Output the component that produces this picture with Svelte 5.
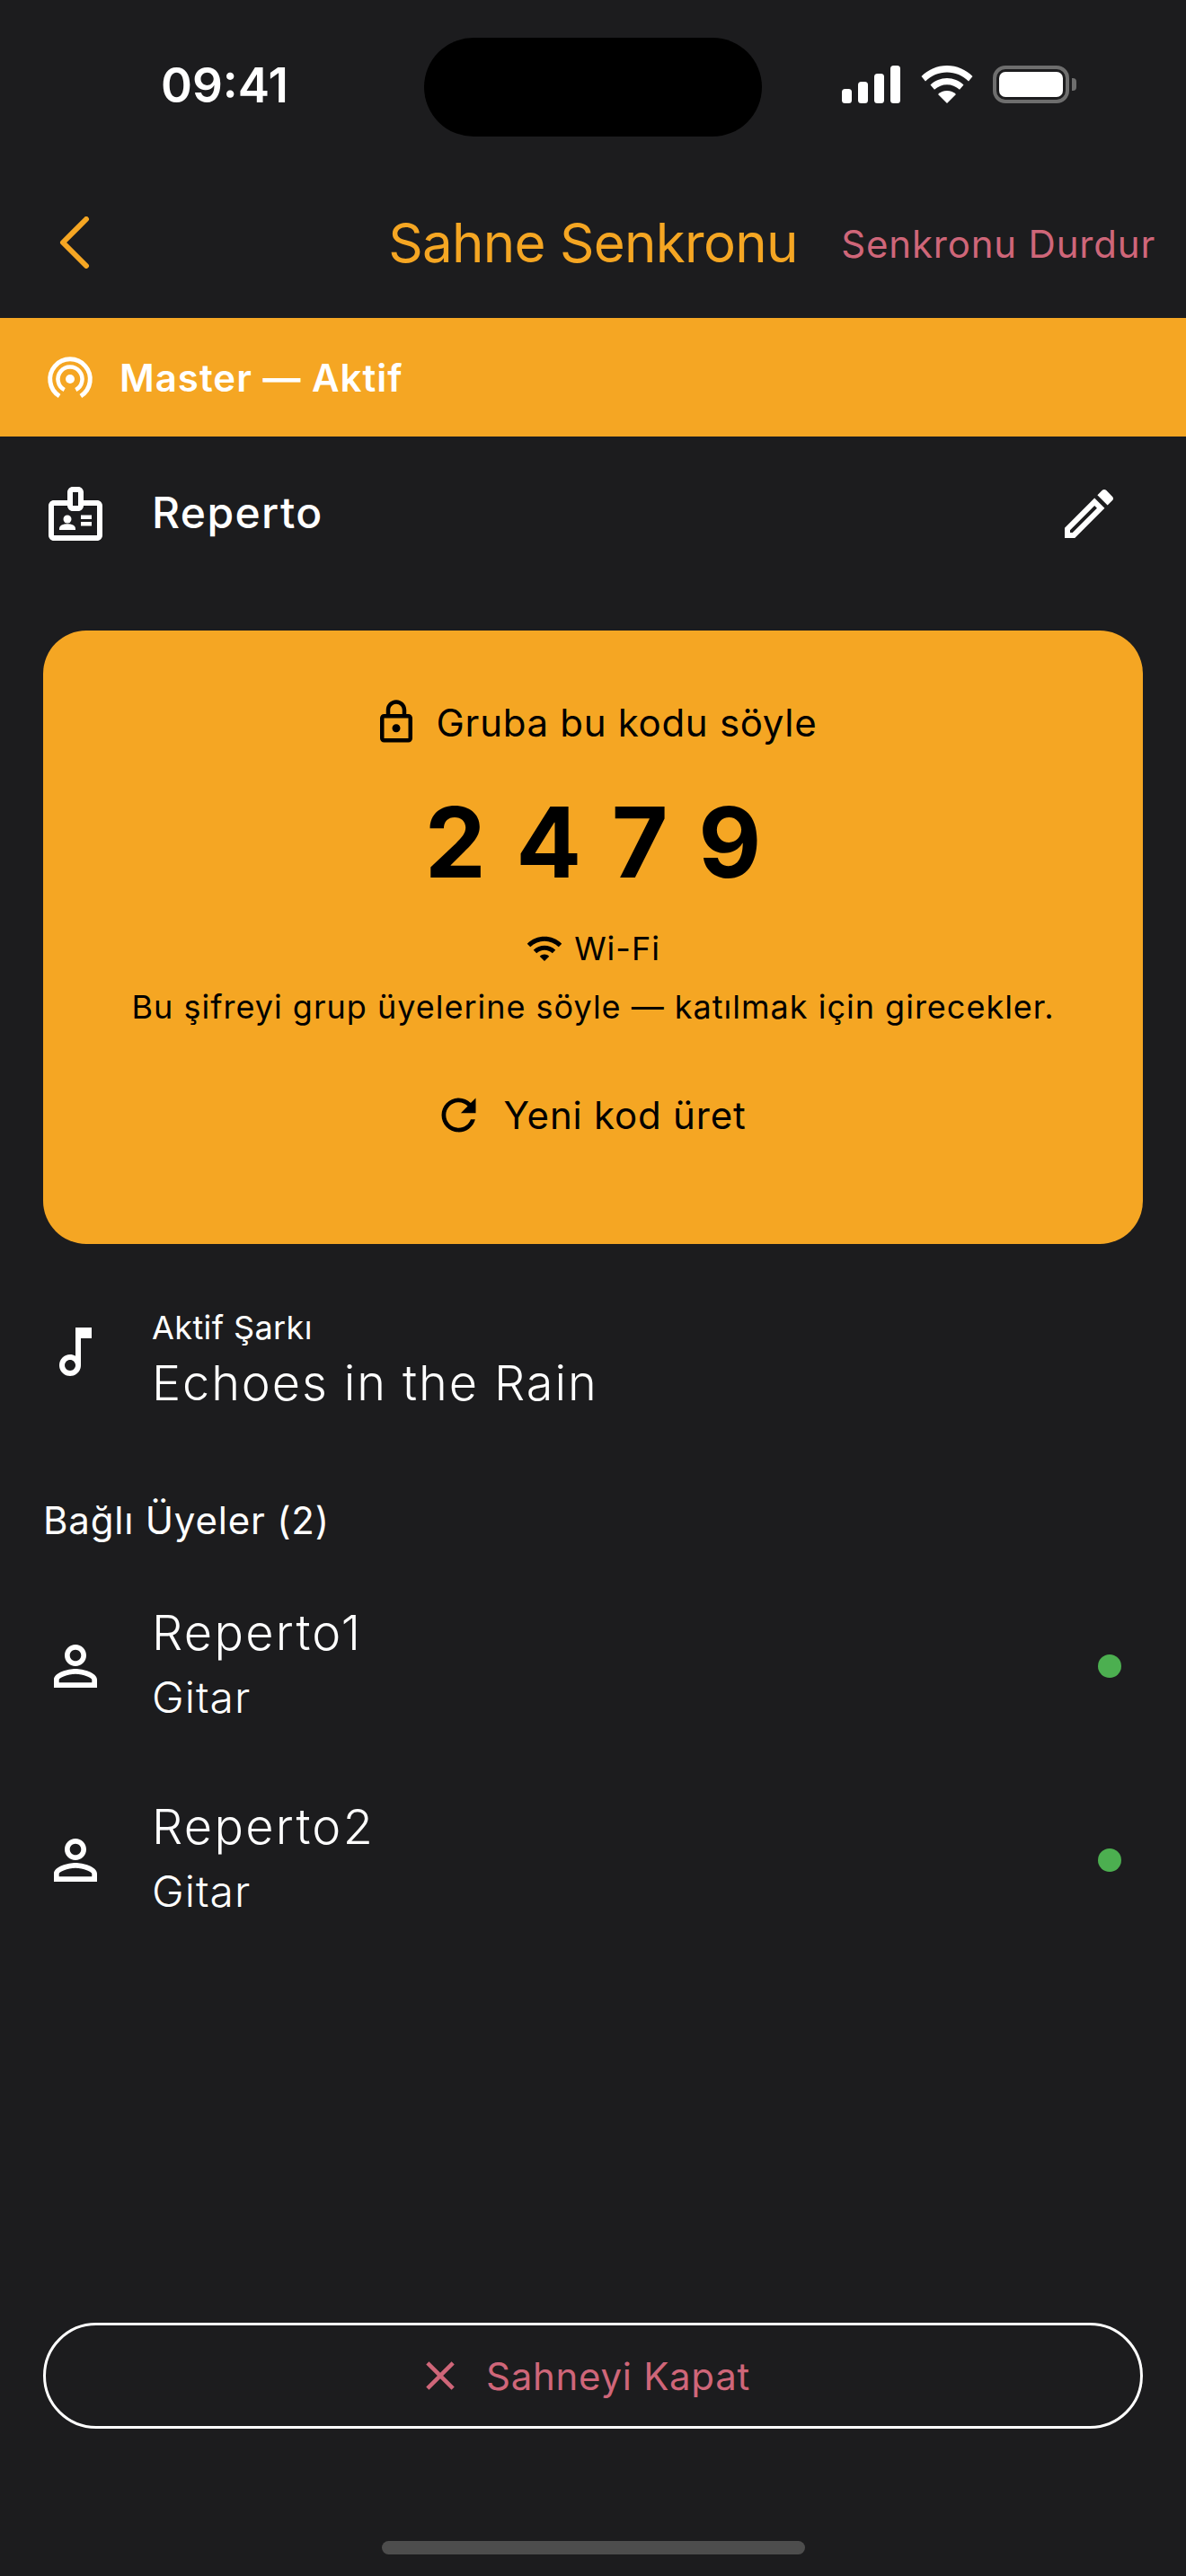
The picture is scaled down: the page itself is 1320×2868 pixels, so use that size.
<script>
	const members = [
		{ name: 'Reperto1', role: 'Gitar' },
		{ name: 'Reperto2', role: 'Gitar' }
	];
	const digits = '2 4 7 9';
</script>

<div class="screen">
	<header class="status">
		<span class="time">09:41</span>
		<div class="island"></div>
		<div class="status-icons">
			<svg class="signal" width="66" height="42" viewBox="0 0 66 42" fill="#fff">
				<rect x="0" y="26" width="11" height="16" rx="3.5" />
				<rect x="18" y="18" width="11" height="24" rx="3.5" />
				<rect x="36" y="9" width="11" height="33" rx="3.5" />
				<rect x="54" y="0" width="11" height="42" rx="3.5" />
			</svg>
			<svg class="wifi-top" width="58" height="42" viewBox="0 0 58 42" fill="#fff">
				<path d="M29 0c11 0 21 4.500 28.500 12l-4.500 5.500C46.500 11 38 7.500 29 7.500S11.500 11 5 17.500L.5 12C8 4.500 18 0 29 0z" />
				<path d="M29 14c7 0 13.500 2.800 18.500 7.500l-4.500 5.300C39 23.300 34.200 21.300 29 21.300s-10 2-14 5.500l-4.500-5.300C15.500 16.800 22 14 29 14z" />
				<path d="M29 28c3.800 0 7.400 1.400 10 3.900L29 42 19 31.900c2.600-2.500 6.200-3.900 10-3.900z" />
			</svg>
			<div class="battery">
				<div class="battery-body"><div class="battery-fill"></div></div>
				<div class="battery-cap"></div>
			</div>
		</div>
	</header>

	<nav class="appbar">
		<button class="back" aria-label="Geri">
			<svg width="36" height="58" viewBox="0 0 36 58" fill="none" stroke="#f5a623" stroke-width="6" stroke-linecap="round" stroke-linejoin="round">
				<path d="M31 3 5 29l26 26" />
			</svg>
		</button>
		<h1>Sahne Senkronu</h1>
		<span class="stop">Senkronu Durdur</span>
	</nav>

	<div class="banner">
		<svg width="60" height="60" viewBox="0 0 60 60" fill="none" stroke="#fff">
			<path d="M18.100 51A22.300 22.300 0 1 1 41.900 51" stroke-width="5" />
			<path d="M23.700 44A13.500 13.500 0 1 1 36.300 44" stroke-width="4.500" />
			<circle cx="30" cy="32" r="5" fill="#fff" stroke="none" />
		</svg>
		<span>Master — Aktif</span>
	</div>

	<div class="group-row">
		<svg class="lead" width="72" height="72" viewBox="0 0 24 24" fill="#fff">
			<path d="M20 7h-5V4c0-1.100-.9-2-2-2h-2C9.900 2 9 2.900 9 4v3H4C2.900 7 2 7.900 2 9v11c0 1.100.9 2 2 2h16c1.100 0 2-.9 2-2V9c0-1.100-.9-2-2-2zM11 4h2v5h-2V4zm9 16H4V9h5c0 1.100.9 2 2 2h2c1.100 0 2-.9 2-2h5v11z" />
			<circle cx="9" cy="14" r="1.500" />
			<path d="M11.080 16.180C10.440 15.900 9.740 15.750 9 15.750s-1.440.15-2.080.43C6.360 16.420 6 16.960 6 17.570V18h6v-.43c0-.61-.36-1.150-.92-1.390zM14 12.500h4V14h-4zM14 15h4v1.500h-4z" />
		</svg>
		<span class="group-name">Reperto</span>
		<svg class="edit" width="72" height="72" viewBox="0 0 24 24" fill="#fff">
			<path d="M14.060 9.020l.92.92L5.920 19H5v-.92l9.060-9.060M17.660 3c-.25 0-.51.1-.7.29l-1.830 1.830 3.750 3.750 1.830-1.830c.39-.39.39-1.020 0-1.410l-2.340-2.340c-.2-.2-.45-.29-.71-.29zm-3.600 3.190L3 17.250V21h3.750L17.810 9.940l-3.750-3.750z" />
		</svg>
	</div>

	<section class="code-card">
		<div class="code-title">
			<svg width="54" height="54" viewBox="0 0 24 24" fill="#000">
				<path d="M18 8h-1V6c0-2.760-2.240-5-5-5S7 3.240 7 6v2H6c-1.100 0-2 .9-2 2v10c0 1.100.9 2 2 2h12c1.100 0 2-.9 2-2V10c0-1.100-.9-2-2-2zM9 6c0-1.660 1.340-3 3-3s3 1.340 3 3v2H9V6zm9 14H6V10h12v10zm-6-3c1.100 0 2-.9 2-2s-.9-2-2-2-2 .9-2 2 .9 2 2 2z" />
			</svg>
			<span>Gruba bu kodu söyle</span>
		</div>
		<div class="code">{digits}</div>
		<div class="transport">
			<svg width="42" height="42" viewBox="0 0 24 24" fill="#000">
				<path d="M1 9l2 2c4.970-4.970 13.030-4.970 18 0l2-2C16.930 2.930 7.080 2.930 1 9zm8 8l3 3 3-3c-1.650-1.660-4.340-1.660-6 0zm-4-4l2 2c2.760-2.760 7.240-2.760 10 0l2-2C15.140 9.140 8.870 9.140 5 13z" />
			</svg>
			<span>Wi-Fi</span>
		</div>
		<p class="hint">Bu şifreyi grup üyelerine söyle — katılmak için girecekler.</p>
		<button class="regen">
			<svg width="57" height="57" viewBox="0 0 24 24" fill="#000">
				<path d="M17.650 6.350C16.200 4.900 14.210 4 12 4c-4.420 0-7.990 3.580-7.990 8s3.570 8 7.990 8c3.730 0 6.840-2.550 7.730-6h-2.080c-.82 2.330-3.040 4-5.650 4-3.310 0-6-2.690-6-6s2.690-6 6-6c1.660 0 3.140.69 4.220 1.780L13 11h7V4l-2.350 2.350z" />
			</svg>
			<span>Yeni kod üret</span>
		</button>
	</section>

	<div class="song">
		<svg class="lead note" width="72" height="72" viewBox="0 0 24 24" fill="#fff">
			<path d="M12 3l.01 10.550c-.59-.34-1.270-.55-2-.55C7.790 13 6 14.790 6 17s1.790 4 4.010 4S14 19.210 14 17V7h4V3h-6zm-1.990 16c-1.100 0-2-.9-2-2s.9-2 2-2 2 .9 2 2-.9 2-2 2z" />
		</svg>
		<div class="song-text">
			<span class="song-label">Aktif Şarkı</span>
			<span class="song-name">Echoes in the Rain</span>
		</div>
	</div>

	<h2 class="members-title">Bağlı Üyeler (2)</h2>

	<ul class="members">
		{#each members as m (m.name)}
			<li class="member">
				<svg class="lead" width="72" height="72" viewBox="0 0 24 24" fill="#fff">
					<path d="M12 5.900c1.160 0 2.100.94 2.100 2.100s-.94 2.100-2.100 2.100S9.900 9.160 9.900 8s.94-2.100 2.100-2.100m0 9c2.970 0 6.100 1.460 6.100 2.100v1.100H5.900V17c0-.64 3.130-2.100 6.100-2.100M12 4C9.790 4 8 5.790 8 8s1.790 4 4 4 4-1.790 4-4-1.790-4-4-4zm0 9c-2.670 0-8 1.340-8 4v3h16v-3c0-2.660-5.330-4-8-4z" />
				</svg>
				<div class="member-text">
					<span class="member-name">{m.name}</span>
					<span class="member-role">{m.role}</span>
				</div>
				<span class="dot"></span>
			</li>
		{/each}
	</ul>

	<div class="bottom">
		<button class="close">
			<svg width="54" height="54" viewBox="0 0 24 24" fill="#cf6679">
				<path d="M19 6.410 17.590 5 12 10.590 6.410 5 5 6.410 10.590 12 5 17.590 6.410 19 12 13.410 17.590 19 19 17.590 13.410 12z" />
			</svg>
			<span>Sahneyi Kapat</span>
		</button>
		<div class="home"></div>
	</div>
</div>

<style>
	:global(body) {
		margin: 0;
		background: #1c1c1e;
	}

	.screen {
		width: 1320px;
		height: 2868px;
		display: flex;
		flex-direction: column;
		background: #1c1c1e;
		color: #fff;
		font-family: Inter, 'Liberation Sans', sans-serif;
		overflow: hidden;
	}

	button {
		font: inherit;
		background: none;
		border: none;
		padding: 0;
		color: inherit;
	}

	/* status bar */
	.status {
		height: 190px;
		flex: none;
		position: relative;
	}

	.time {
		position: absolute;
		left: 179px;
		top: 64px;
		font-size: 53px;
		line-height: 62px;
		font-weight: 600;
	}

	.island {
		position: absolute;
		left: 472px;
		top: 42px;
		width: 376px;
		height: 110px;
		border-radius: 55px;
		background: #000;
	}

	.status-icons {
		position: absolute;
		left: 937px;
		top: 73px;
		display: flex;
		align-items: flex-end;
		gap: 12px;
	}

	.wifi-top {
		margin-left: 10px;
	}

	.battery {
		display: flex;
		align-items: center;
		margin-left: 10px;
		gap: 3px;
	}

	.battery-body {
		width: 85px;
		height: 42px;
		box-sizing: border-box;
		border: 4px solid #6e6e6e;
		border-radius: 14px;
		padding: 3px;
	}

	.battery-fill {
		height: 100%;
		background: #fff;
		border-radius: 7px;
	}

	.battery-cap {
		width: 5px;
		height: 14px;
		background: #6e6e6e;
		border-radius: 0 4px 4px 0;
	}

	/* app bar */
	.appbar {
		height: 164px;
		flex: none;
		position: relative;
		display: flex;
		align-items: center;
		justify-content: center;
		padding-bottom: 4px;
		box-sizing: border-box;
	}

	.back {
		position: absolute;
		left: 65px;
		top: 51px;
		display: flex;
	}

	h1 {
		margin: 0;
		font-size: 60px;
		font-weight: 400;
		color: #f5a623;
		letter-spacing: -0.700px;
	}

	.stop {
		position: absolute;
		right: 34px;
		top: 57px;
		font-size: 42px;
		line-height: 50px;
		color: #cf6679;
		letter-spacing: 0.800px;
	}

	/* master banner */
	.banner {
		height: 132px;
		flex: none;
		display: flex;
		align-items: center;
		gap: 25px;
		padding-left: 48px;
		background: #f5a623;
	}

	.banner span {
		font-size: 42px;
		font-weight: 600;
		letter-spacing: 1px;
	}

	.group-row {
		height: 172px;
		flex: none;
		display: flex;
		align-items: center;
		padding: 0 72px 0 48px;
	}

	.group-name {
		flex: 1;
		margin: 0 0 4px 49px;
		font-size: 48px;
		font-weight: 500;
		letter-spacing: 1.400px;
	}

	/* code card */
	.code-card {
		margin: 44px 48px 0;
		height: 683px;
		flex: none;
		box-sizing: border-box;
		padding-top: 72px;
		display: flex;
		flex-direction: column;
		align-items: center;
		background: #f5a623;
		border-radius: 48px;
		color: #000;
	}

	.code-title {
		display: flex;
		align-items: center;
		gap: 18px;
		height: 60px;
		padding-left: 3px;
		font-size: 42px;
		font-weight: 430;
		letter-spacing: 0.700px;
	}

	.code {
		margin-top: 39px;
		padding-left: 4px;
		font-size: 108px;
		line-height: 130px;
		font-weight: 700;
		letter-spacing: 4px;
		white-space: pre;
	}

	.transport {
		margin-top: 31px;
		display: flex;
		align-items: center;
		gap: 12px;
		font-size: 36px;
		line-height: 44px;
		letter-spacing: 1px;
	}

	.hint {
		margin: 21px 0 0;
		font-size: 36px;
		line-height: 44px;
		letter-spacing: 1px;
	}

	.regen {
		margin-top: 70px;
		display: flex;
		align-items: center;
		gap: 22px;
		padding-right: 8px;
		font-size: 42px;
		font-weight: 430;
		letter-spacing: 0.800px;
	}

	/* active song */
	.song {
		margin-top: 70px;
		display: flex;
		align-items: center;
		padding-left: 48px;
		flex: none;
	}

	.note {
		margin-bottom: 24px;
	}

	.song-text,
	.member-text {
		margin-left: 49px;
		display: flex;
		flex-direction: column;
	}

	.song-label {
		font-size: 36px;
		line-height: 46px;
		letter-spacing: 0.400px;
	}

	.song-name {
		font-size: 54px;
		line-height: 78px;
		font-weight: 350;
		letter-spacing: 1.900px;
	}

	.members-title {
		margin: 86px 0 0 48px;
		font-size: 42px;
		line-height: 56px;
		font-weight: 400;
		letter-spacing: 0.800px;
	}

	.members {
		list-style: none;
		margin: 26px 0 0;
		padding: 0;
	}

	.member {
		height: 216px;
		display: flex;
		align-items: center;
		padding: 0 72px 0 48px;
	}

	.member-text {
		flex: 1;
		padding-bottom: 8px;
	}

	.member-name {
		font-size: 54px;
		line-height: 78px;
		font-weight: 350;
		letter-spacing: 2.300px;
	}

	.member-role {
		font-size: 48px;
		line-height: 66px;
		font-weight: 350;
		letter-spacing: 1px;
	}

	.dot {
		width: 26px;
		height: 26px;
		border-radius: 50%;
		background: #4caf50;
	}

	/* bottom */
	.bottom {
		margin-top: auto;
		padding: 0 48px 24px;
		display: flex;
		flex-direction: column;
		align-items: center;
	}

	.close {
		width: 100%;
		height: 118px;
		box-sizing: border-box;
		display: flex;
		align-items: center;
		justify-content: center;
		gap: 24px;
		padding-right: 22px;
		border: 3px solid #fff;
		border-radius: 59px;
		color: #cf6679;
		font-size: 42px;
		font-weight: 430;
		letter-spacing: 0.700px;
	}

	.home {
		margin-top: 125px;
		width: 471px;
		height: 15px;
		border-radius: 8px;
		background: #4d4d4d;
	}
</style>
